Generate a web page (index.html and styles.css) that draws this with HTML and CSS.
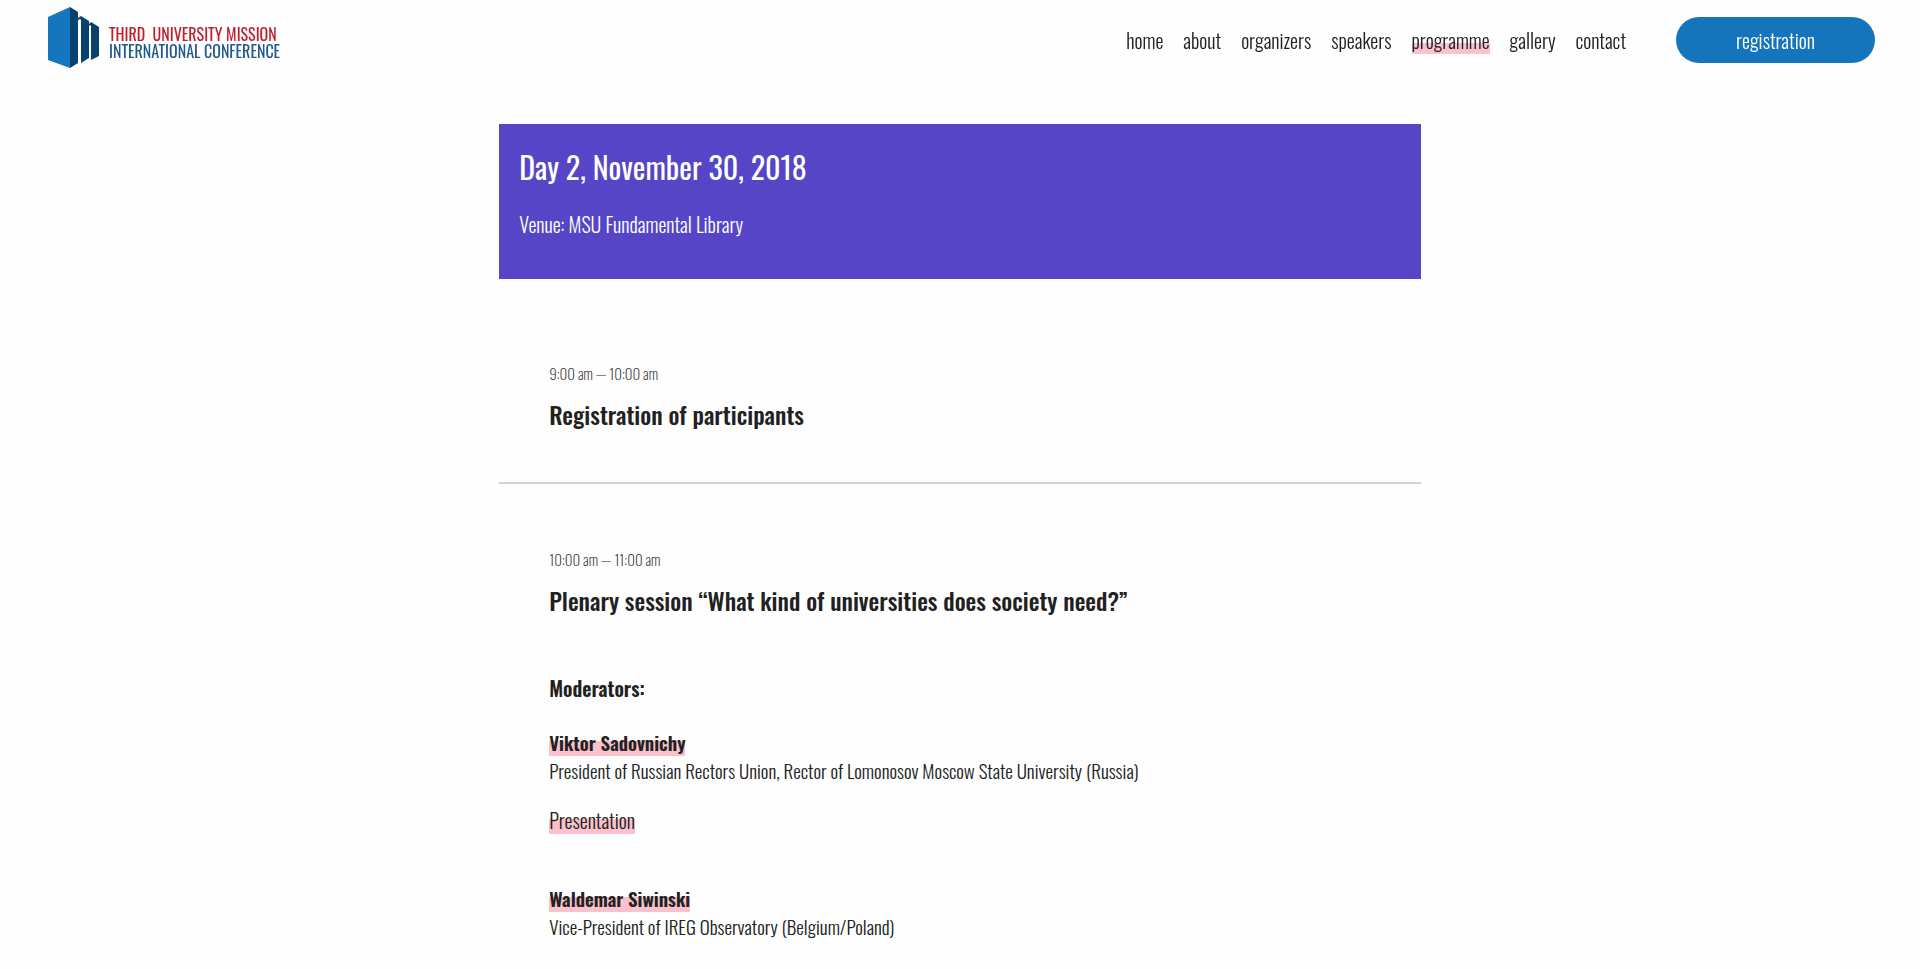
FILE: index.html
```html
<!DOCTYPE html>
<html lang="en">
<head>
<meta charset="utf-8">
<title>Programme – Third University Mission International Conference</title>
<link rel="stylesheet" href="styles.css">
</head>
<body>
<header class="header">
  <a class="logo" href="#">
    <svg class="logo-mark" width="52" height="62" viewBox="0 0 52 62" aria-hidden="true">
      <path fill="#1576bd" d="M0 10 22 0v61L0 53z"/>
      <path fill="#07426f" d="M22 0 30 5v51l-8 5zM30 11l3-2 8 5v37l-8 5V13l-1-1-2 1zM41 17l2-2 8 5v29l-8 4V19l-1-1-1 1z"/>
    </svg>
    <span class="logo-text"><span class="logo-red">THIRD&nbsp; UNIVERSITY MISSION</span><span class="logo-blue">INTERNATIONAL CONFERENCE</span></span>
  </a>
  <nav class="nav">
    <a href="#">home</a>
    <a href="#">about</a>
    <a href="#">organizers</a>
    <a href="#">speakers</a>
    <a href="#" class="active">programme</a>
    <a href="#">gallery</a>
    <a href="#">contact</a>
  </nav>
  <a class="register" href="#">registration</a>
</header>
<main class="programme">
  <section class="day">
    <h1>Day 2, November 30, 2018</h1>
    <p>Venue: MSU Fundamental Library</p>
  </section>
  <section class="event">
    <p class="time">9:00 am — 10:00 am</p>
    <h2>Registration of participants</h2>
  </section>
  <section class="event">
    <p class="time">10:00 am — 11:00 am</p>
    <h2>Plenary session “What kind of universities does society need?”</h2>
    <h3>Moderators:</h3>
    <div class="person">
      <a class="name" href="#">Viktor Sadovnichy</a>
      <p>President of Russian Rectors Union, Rector of Lomonosov Moscow State University (Russia)</p>
      <a class="talk" href="#">Presentation</a>
    </div>
    <div class="person">
      <a class="name" href="#">Waldemar Siwinski</a>
      <p>Vice-President of IREG Observatory (Belgium/Poland)</p>
    </div>
  </section>
</main>
</body>
</html>
```
FILE: styles.css
```css
* { box-sizing: border-box; }
body {
  margin: 0;
  background: #fefefe;
  color: #212121;
  font-family: Oswald, "Liberation Sans Narrow", "Liberation Sans", sans-serif;
  font-size: 20px;
  font-weight: 300;
  line-height: 28px;
}
h1, h2, h3, p { margin: 0; }
a { color: inherit; text-decoration: none; }

.header {
  position: fixed;
  top: 0;
  left: 0;
  right: 0;
  z-index: 10;
  display: flex;
  align-items: center;
  height: 80px;
  padding: 0 45px 0 48px;
  background: rgba(254, 254, 254, 0.95);
}
.logo { display: flex; align-items: center; gap: 9px; margin-right: auto; padding-bottom: 4px; }
.logo-text { display: grid; padding-top: 9px; font-size: 16px; font-weight: 400; line-height: 17px; white-space: nowrap; }
.logo-red { color: #be1e2d; }
.logo-blue { color: #235a8c; }
.nav { display: flex; gap: 20px; }
.active { background: linear-gradient(transparent 62%, #fbc2cd 62%); }
.register {
  width: 199px;
  margin-left: 50px;
  border-radius: 23px;
  background: #1475bc;
  color: #fff;
  line-height: 46px;
  text-align: center;
}

.programme { width: 48%; min-width: 700px; margin: 0 auto; padding-top: 2px; }
.programme::before { content: ""; display: block; height: 2px; margin-bottom: 120px; background: #c9d6dd; }
.day { padding: 23px 20px 33px; background: #5645c6; color: #fff; }
.day h1 { margin-bottom: 16px; font-size: 30px; font-weight: 400; line-height: 40px; }
.day p { line-height: 43px; }
.event { padding: 64px 50px 49px; }
.day + .event { padding-top: 83px; border-bottom: 2px solid #c9d6dd; }
.time { font-size: 15px; font-weight: 200; line-height: 22px; }
h2 { margin-top: 11px; font-size: 24px; font-weight: 500; line-height: 38px; }
h3 { margin-top: 53px; font-size: 20px; font-weight: 600; line-height: 32px; }
.person { padding-top: 24px; font-size: 19px; }
.person + .person { padding-top: 50px; }
.name, .talk { background: linear-gradient(transparent 46%, #fbc2cd 46%); }
.name { font-weight: 600; }
.talk { display: inline-block; margin-top: 22px; font-size: 20px; }
```
